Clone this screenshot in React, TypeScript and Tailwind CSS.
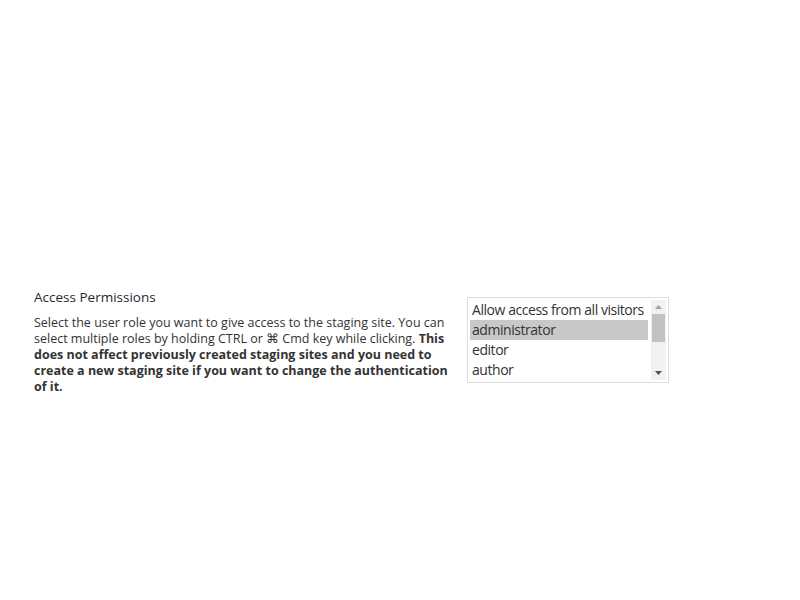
import React from "react";

const roles = ["Allow access from all visitors", "administrator", "editor", "author"];

export default function App() {
  return (
    <div className="w-[800px] h-[600px] bg-white text-[#333] font-['Open_Sans',sans-serif]">
      <div className="pt-[288px] pl-[34px] flex items-start">
        {/* Label + description */}
        <div className="w-[416px]">
          <div className="text-[13.5px] leading-[18px] text-[#23282d]">Access Permissions</div>
          <p className="mt-[9px] text-[12.5px] leading-[16px]">
            Select the user role you want to give access to the staging site. You can select multiple roles by holding CTRL or ⌘ Cmd key while clicking.{" "}
            <b className="font-bold">
              This does not affect previously created staging sites and you need to create a new staging site if you want to change the authentication of it.
            </b>
          </p>
        </div>

        {/* Listbox */}
        <div className="ml-[17px] mt-[9px] w-[202px] h-[86px] border border-[#ddd] flex p-[2px] bg-white">
          <div className="flex-1 overflow-hidden">
            {roles.map((r) => (
              <div
                key={r}
                className={
                  "h-[20px] px-[2px] text-[14px] leading-[20px] tracking-[-0.45px] whitespace-nowrap " +
                  (r === "administrator" ? "bg-[#c8c8c8]" : "")
                }
              >
                {r}
              </div>
            ))}
          </div>
          <div className="w-[15px] ml-[3px] bg-[#f1f1f1] flex flex-col items-center">
            <div className="h-[14px] flex items-center justify-center">
              <svg width="7" height="4" viewBox="0 0 7 4"><path d="M3.5 0L7 4H0z" fill="#a3a3a3" /></svg>
            </div>
            <div className="w-[13px] h-[28px] bg-[#c1c1c1]" />
            <div className="flex-1" />
            <div className="h-[14px] flex items-center justify-center">
              <svg width="7" height="4" viewBox="0 0 7 4"><path d="M0 0h7L3.5 4z" fill="#505050" /></svg>
            </div>
          </div>
        </div>
      </div>
    </div>
  );
}
